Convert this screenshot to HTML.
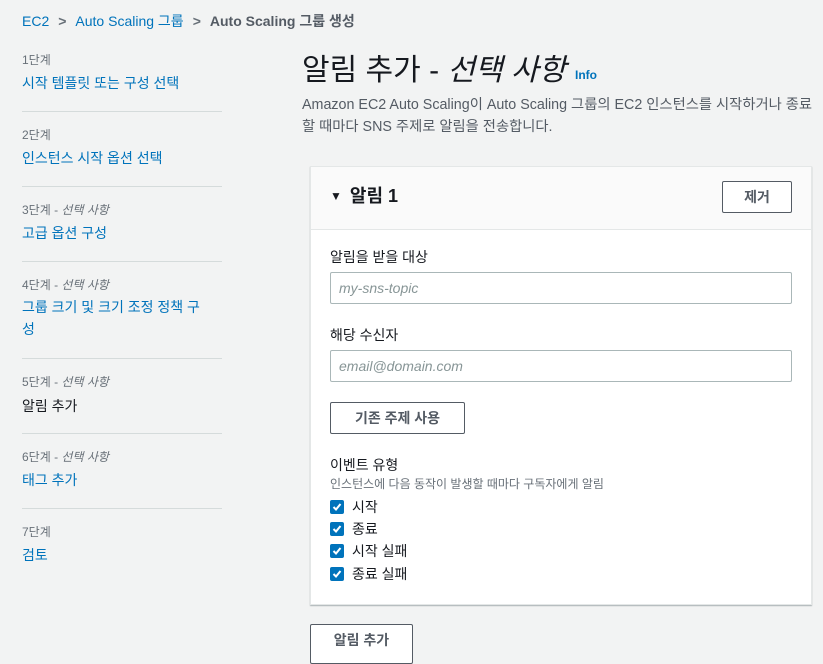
<!DOCTYPE html>
<html><head><meta charset="utf-8"><style>
*{box-sizing:border-box;margin:0;padding:0}
body{width:823px;height:654px;overflow:hidden;background:#f2f3f3;font-family:"Liberation Sans","Noto Sans CJK KR",sans-serif;color:#16191f;position:relative}
.a{position:absolute;white-space:nowrap}
.bc{top:12px;left:22px;font-size:14px;line-height:18px}
.bc span{color:#0073bb}
.bc i{font-style:normal;color:#687078;margin:0 9px;font-weight:bold}
.bc b{color:#545b64;font-weight:bold}
.step{font-size:12px;color:#687078;line-height:16px}
.step em{font-style:italic}
.lnk{font-size:14px;color:#0073bb;line-height:22px}
.hr{position:absolute;left:22px;width:200px;height:1px;background:#d5dbdb}
.panel{position:absolute;left:310px;top:166px;width:502px;height:439px;background:#fff;border:1px solid #e4e7e7;box-shadow:0 1px 1px rgba(0,28,36,.3)}
.ph{position:absolute;left:0;top:0;width:100%;height:63px;background:#fafafa;border-bottom:1px solid #e4e7e7}
.btn{position:absolute;border:1px solid #545b64;border-radius:2px;background:#fff;font-size:14px;font-weight:bold;color:#545b64;text-align:center}
.inp{position:absolute;left:330px;width:462px;height:32px;border:1px solid #aab7b8;border-radius:2px;background:#fff;font-size:14px;font-style:italic;color:#879596;padding-left:8px;line-height:30px}
.lbl{font-size:14px;color:#16191f}
.cb{position:absolute;left:330px;width:14px;height:14px;background:#0073bb;border-radius:2px}
.cb svg{position:absolute;left:2px;top:2px}
</style></head><body>
<div class="a bc"><span>EC2</span><i>&gt;</i><span>Auto Scaling 그룹</span><i>&gt;</i><b>Auto Scaling 그룹 생성</b></div>

<div class="a step" style="left:22px;top:52px">1단계</div>
<div class="a lnk" style="left:22px;top:72px">시작 템플릿 또는 구성 선택</div>
<div class="hr" style="top:111px"></div>
<div class="a step" style="left:22px;top:127px">2단계</div>
<div class="a lnk" style="left:22px;top:147px">인스턴스 시작 옵션 선택</div>
<div class="hr" style="top:186px"></div>
<div class="a step" style="left:22px;top:202px">3단계 - <em>선택 사항</em></div>
<div class="a lnk" style="left:22px;top:222px">고급 옵션 구성</div>
<div class="hr" style="top:261px"></div>
<div class="a step" style="left:22px;top:277px">4단계 - <em>선택 사항</em></div>
<div class="a lnk" style="left:22px;top:296px">그룹 크기 및 크기 조정 정책 구</div>
<div class="a lnk" style="left:22px;top:318px">성</div>
<div class="hr" style="top:358px"></div>
<div class="a step" style="left:22px;top:374px">5단계 - <em>선택 사항</em></div>
<div class="a lnk" style="left:22px;top:395px;color:#16191f">알림 추가</div>
<div class="hr" style="top:433px"></div>
<div class="a step" style="left:22px;top:449px">6단계 - <em>선택 사항</em></div>
<div class="a lnk" style="left:22px;top:469px">태그 추가</div>
<div class="hr" style="top:508px"></div>
<div class="a step" style="left:22px;top:524px">7단계</div>
<div class="a lnk" style="left:22px;top:544px">검토</div>

<div class="a" style="left:302px;top:52px;font-size:30px;line-height:38px;color:#16191f">알림 추가 - <em>선택 사항</em></div>
<div class="a" style="left:575px;top:68px;font-size:12px;font-weight:bold;color:#0073bb">Info</div>
<div class="a" style="left:302px;top:94px;font-size:14.3px;line-height:22px;color:#545b64">Amazon EC2 Auto Scaling이 Auto Scaling 그룹의 EC2 인스턴스를 시작하거나 종료<br>할 때마다 SNS 주제로 알림을 전송합니다.</div>

<div class="panel"><div class="ph"></div></div>
<div class="a" style="left:330px;top:184px;font-size:18px;font-weight:bold;line-height:24px"><span style="font-size:12px;position:relative;top:-2px;margin-right:8px">▼</span>알림 1</div>
<div class="btn" style="left:722px;top:181px;width:70px;height:32px;line-height:30px">제거</div>
<div class="a lbl" style="left:330px;top:247px">알림을 받을 대상</div>
<div class="inp" style="top:272px">my-sns-topic</div>
<div class="a lbl" style="left:330px;top:325px">해당 수신자</div>
<div class="inp" style="top:350px">email@domain.com</div>
<div class="btn" style="left:330px;top:402px;width:135px;height:32px;line-height:30px">기존 주제 사용</div>
<div class="a lbl" style="left:330px;top:455px">이벤트 유형</div>
<div class="a" style="left:330px;top:475px;font-size:12px;color:#687078">인스턴스에 다음 동작이 발생할 때마다 구독자에게 알림</div>
<div class="cb" style="top:500px"><svg width="10" height="10" viewBox="0 0 10 10"><path d="M1.5 5 L4 7.5 L8.5 2" stroke="#fff" stroke-width="2" fill="none"/></svg></div>
<div class="a lbl" style="left:352px;top:497px">시작</div>
<div class="cb" style="top:522px"><svg width="10" height="10" viewBox="0 0 10 10"><path d="M1.5 5 L4 7.5 L8.5 2" stroke="#fff" stroke-width="2" fill="none"/></svg></div>
<div class="a lbl" style="left:352px;top:519px">종료</div>
<div class="cb" style="top:544px"><svg width="10" height="10" viewBox="0 0 10 10"><path d="M1.5 5 L4 7.5 L8.5 2" stroke="#fff" stroke-width="2" fill="none"/></svg></div>
<div class="a lbl" style="left:352px;top:541px">시작 실패</div>
<div class="cb" style="top:567px"><svg width="10" height="10" viewBox="0 0 10 10"><path d="M1.5 5 L4 7.5 L8.5 2" stroke="#fff" stroke-width="2" fill="none"/></svg></div>
<div class="a lbl" style="left:352px;top:564px">종료 실패</div>

<div class="btn" style="left:310px;top:624px;width:103px;height:40px;line-height:30px">알림 추가</div>
</body></html>
